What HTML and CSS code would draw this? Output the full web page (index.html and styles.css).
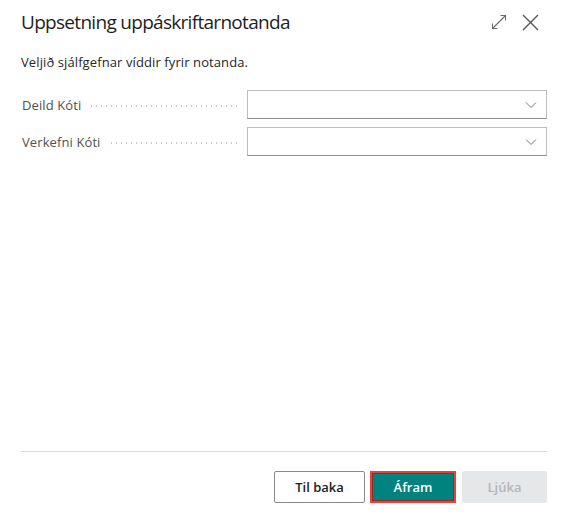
FILE: index.html
```html
<!DOCTYPE html>
<html lang="is">
<head>
    <meta charset="UTF-8">
    <title>Uppsetning uppáskriftarnotanda</title>
    <link rel="stylesheet" href="styles.css">
</head>
<body>
    <div class="dialog">
        <div class="header">
            <h1 class="title">Uppsetning uppáskriftarnotanda</h1>
            <div class="header-icons">
                <!-- expand -->
                <svg class="icon" width="16" height="16" viewBox="0 0 16 16">
                    <path d="M1.5 14.5 L14.5 1.5 M9.5 1.5 H14.5 V6.5 M1.5 9.5 V14.5 H6.5" fill="none" stroke="#6a6a6a" stroke-width="1.1"/>
                </svg>
                <!-- close -->
                <svg class="icon" width="17" height="17" viewBox="0 0 17 17">
                    <path d="M1 1 L16 16 M16 1 L1 16" fill="none" stroke="#555" stroke-width="1.4"/>
                </svg>
            </div>
        </div>

        <p class="intro">Veljið sjálfgefnar víddir fyrir notanda.</p>

        <div class="fields">
            <div class="field">
                <label class="label"><span>Deild Kóti</span><span class="dots"></span></label>
                <div class="select">
                    <svg width="12" height="8" viewBox="0 0 12 8"><path d="M1 1.5 L6 6.5 L11 1.5" fill="none" stroke="#777" stroke-width="1"/></svg>
                </div>
            </div>
            <div class="field">
                <label class="label"><span>Verkefni Kóti</span><span class="dots"></span></label>
                <div class="select">
                    <svg width="12" height="8" viewBox="0 0 12 8"><path d="M1 1.5 L6 6.5 L11 1.5" fill="none" stroke="#777" stroke-width="1"/></svg>
                </div>
            </div>
        </div>

        <div class="spacer"></div>

        <div class="footer">
            <button class="btn" type="button">Til baka</button>
            <button class="btn primary" type="button">Áfram</button>
            <button class="btn disabled" type="button">Ljúka</button>
        </div>
    </div>
</body>
</html>
```

FILE: styles.css
```css
html{
    background: #ffffff;
}

body{
    margin: 0;
    font-family: "Open Sans", "Noto Sans", sans-serif;
    color: #212121;
}

.dialog{
    height: 523px;
    box-sizing: border-box;
    padding: 0 22px 0 21px;
    display: flex;
    flex-direction: column;
}

.header{
    display: flex;
    align-items: center;
    justify-content: space-between;
    height: 44px;
}

.title{
    margin: 0;
    font-size: 19px;
    letter-spacing: -0.7px;
    font-weight: 400;
    color: #1e1e1e;
}

.header-icons{
    display: flex;
    align-items: center;
    gap: 15px;
    margin-right: 8px;
}

.icon{
    display: block;
}

.intro{
    margin: 10px 0 0 0;
    font-size: 13px;
    letter-spacing: 0.1px;
    line-height: 16px;
    color: #262626;
}

.fields{
    margin-top: 20px;
    display: flex;
    flex-direction: column;
    gap: 8px;
}

.field{
    display: flex;
    align-items: center;
}

.label{
    width: 226px;
    display: flex;
    align-items: center;
    font-size: 13px;
    letter-spacing: 0.1px;
    color: #505050;
    padding-left: 1px;
    box-sizing: border-box;
}

.dots{
    flex: 1;
    height: 2px;
    margin: 2px 7px 0 8px;
    background-image: radial-gradient(circle, #c6c6c6 0.7px, transparent 0.8px);
    background-size: 5px 2px;
    background-repeat: repeat-x;
}

.select{
    width: 300px;
    height: 29px;
    box-sizing: border-box;
    border: 1px solid #bdbdbd;
    border-bottom-color: #8d8d8d;
    display: flex;
    align-items: center;
    justify-content: flex-end;
    padding-right: 9px;
}

.select svg{
    display: block;
}

.spacer{
    flex: 1;
}

.footer{
    border-top: 1px solid #dcdcdc;
    padding: 19px 0 20px 0;
    display: flex;
    justify-content: flex-end;
    gap: 5px;
}

.btn{
    height: 32px;
    box-sizing: border-box;
    border: 1px solid #8a8a8a;
    border-radius: 2px;
    background: #ffffff;
    font-family: "Open Sans", "Noto Sans", sans-serif;
    font-size: 13px;
    font-weight: 600;
    color: #212121;
    padding: 0;
    width: 91px;
}

.primary{
    width: 86px;
    background: #00827f;
    color: #ffffff;
    border: 2px solid #e5413d;
    border-radius: 0;
    box-shadow: inset 0 0 0 1px #8a2f2a;
}

.disabled{
    width: 85px;
    margin-left: 1px;
    background: #e6e7e8;
    border-color: #e6e7e8;
    color: #b4b6b8;
}
```
